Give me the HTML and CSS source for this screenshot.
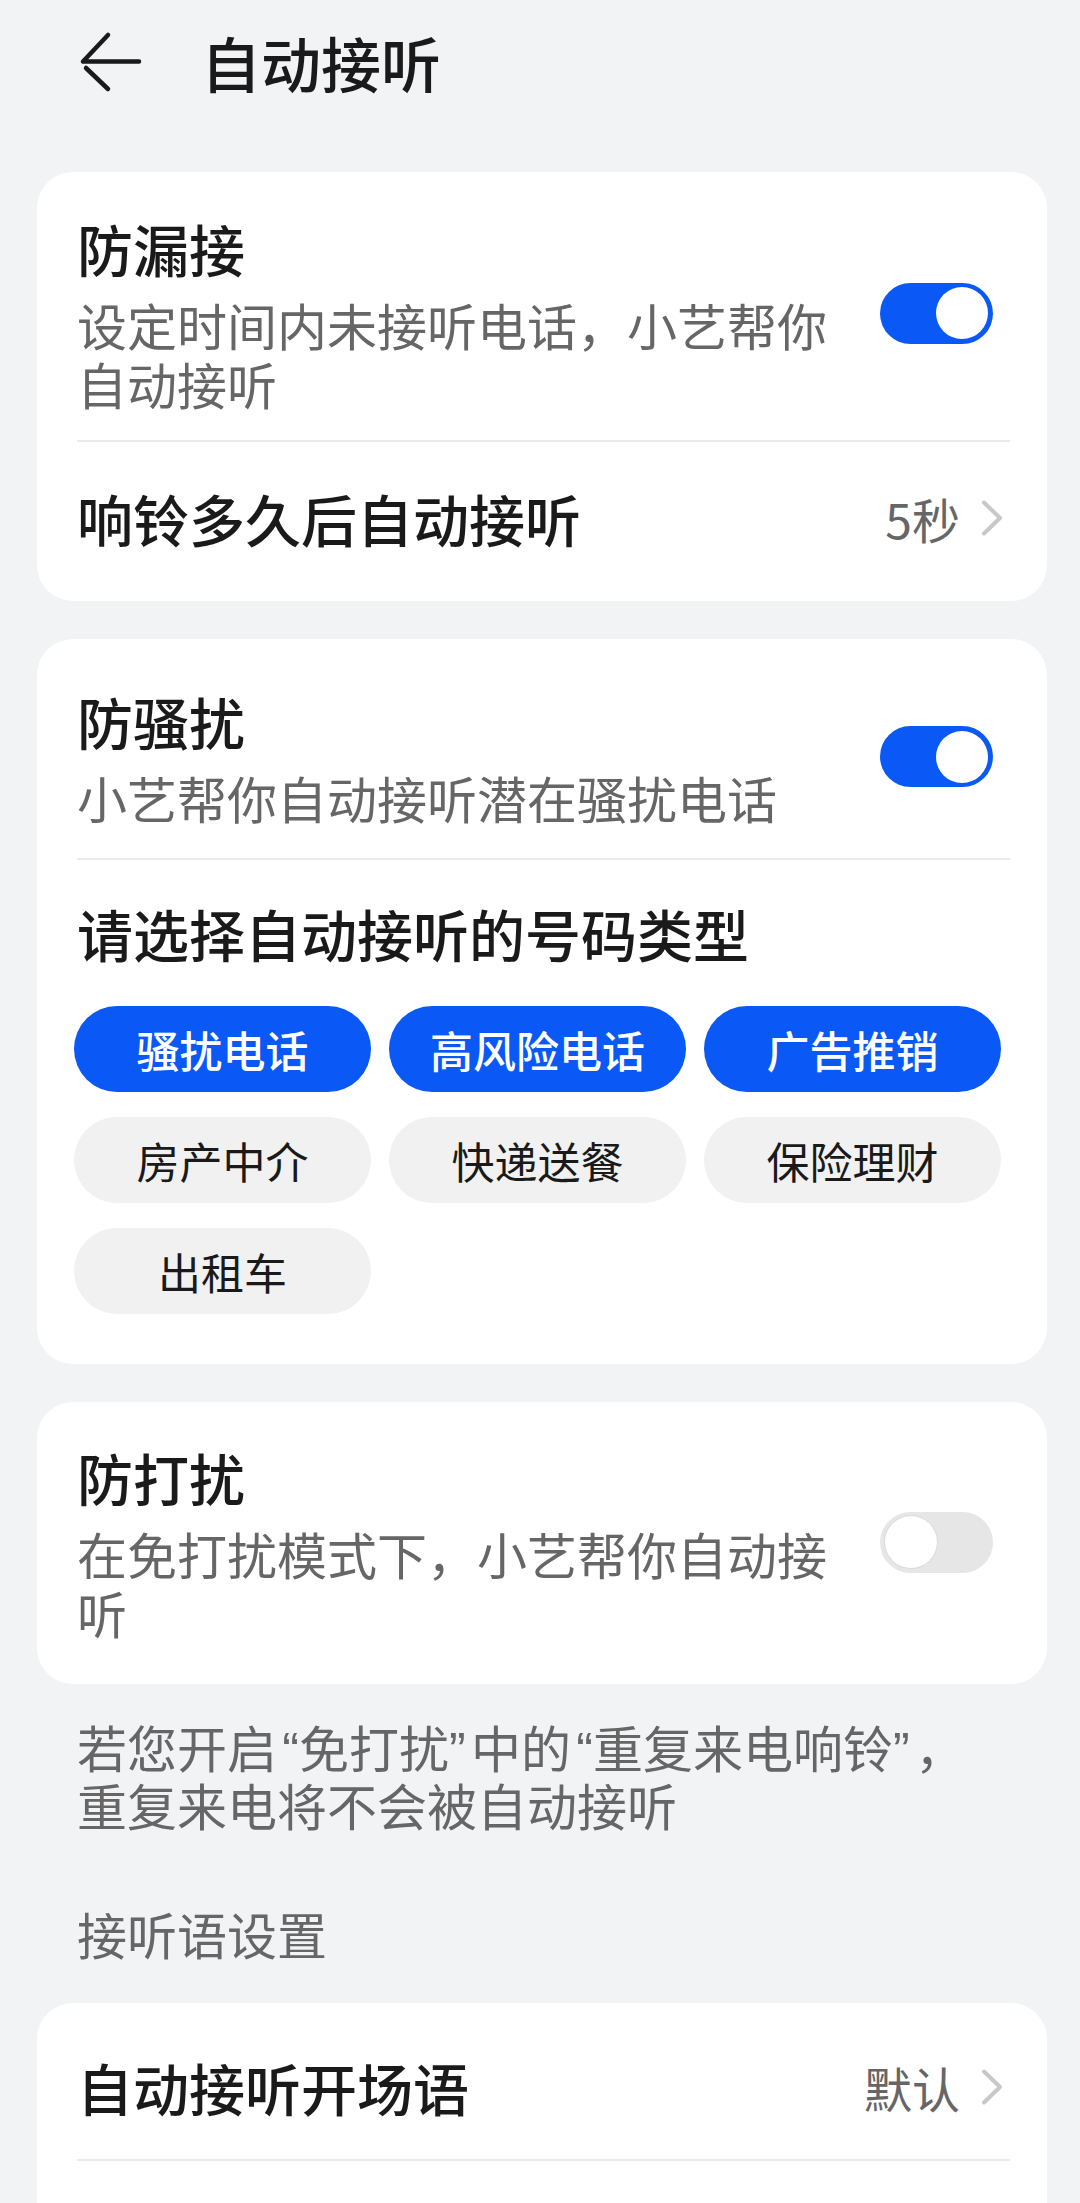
FILE: index.html
```html
<!DOCTYPE html>
<html lang="zh-CN">
<head>
<meta charset="utf-8">
<title>自动接听</title>
<link rel="stylesheet" href="styles.css">
</head>
<body>
<div class="page">
  <header class="topbar">
    <svg class="back" viewBox="0 0 64 64" aria-hidden="true">
      <path d="M30 5 L5 31.5 H61" fill="none" stroke="#1a1a1a" stroke-width="4.5" stroke-linecap="round" stroke-linejoin="round"/>
      <path d="M8 38 L30 59" fill="none" stroke="#1a1a1a" stroke-width="4.5" stroke-linecap="round"/>
    </svg>
    <h1 class="title">自动接听</h1>
  </header>

  <section class="card card-a">
    <div class="switch-row sep pad-a">
      <div class="text">
        <div class="item-title">防漏接</div>
        <div class="item-sub">设定时间内未接听电话，小艺帮你自动接听</div>
      </div>
      <span class="switch on"><span class="knob"></span></span>
    </div>
    <div class="link-row">
      <div class="item-title">响铃多久后自动接听</div>
      <div class="value">5秒<svg class="chev" viewBox="0 0 24 40" aria-hidden="true"><path d="M4 4.5 L20 20 L4 35.5" fill="none" stroke="#c8c8c8" stroke-width="4" stroke-linecap="round" stroke-linejoin="round"/></svg></div>
    </div>
  </section>

  <section class="card card-b">
    <div class="switch-row sep pad-b">
      <div class="text">
        <div class="item-title">防骚扰</div>
        <div class="item-sub">小艺帮你自动接听潜在骚扰电话</div>
      </div>
      <span class="switch on"><span class="knob"></span></span>
    </div>
    <div class="types">
      <div class="item-title">请选择自动接听的号码类型</div>
      <div class="chips">
        <span class="chip sel">骚扰电话</span>
        <span class="chip sel">高风险电话</span>
        <span class="chip sel">广告推销</span>
        <span class="chip">房产中介</span>
        <span class="chip">快递送餐</span>
        <span class="chip">保险理财</span>
        <span class="chip">出租车</span>
      </div>
    </div>
  </section>

  <section class="card card-c">
    <div class="switch-row pad-c">
      <div class="text">
        <div class="item-title">防打扰</div>
        <div class="item-sub">在免打扰模式下，小艺帮你自动接听</div>
      </div>
      <span class="switch off"><span class="knob"></span></span>
    </div>
  </section>

  <p class="note">若您开启<span class="q ql">“</span>免打扰<span class="q qr">”</span>中的<span class="q ql">“</span>重复来电响铃<span class="q qr">”</span>，重复来电将不会被自动接听</p>

  <h2 class="group">接听语设置</h2>

  <section class="card card-d">
    <div class="link-row sep row-d">
      <div class="item-title">自动接听开场语</div>
      <div class="value">默认<svg class="chev" viewBox="0 0 24 40" aria-hidden="true"><path d="M4 4.5 L20 20 L4 35.5" fill="none" stroke="#c8c8c8" stroke-width="4" stroke-linecap="round" stroke-linejoin="round"/></svg></div>
    </div>
    <div class="link-row"></div>
  </section>
</div>
</body>
</html>
```

FILE: styles.css
```css
html, body {
  margin: 0;
  padding: 0;
}

body {
  background: #f1f3f5;
  font-family: "Noto Sans CJK SC", "Noto Sans", sans-serif;
  color: #1a1a1a;
}

.page {
  width: 1080px;
  height: 2203px;
  overflow: hidden;
}

.topbar {
  height: 124px;
  display: flex;
  align-items: center;
  padding-left: 78px;
}

.back {
  width: 64px;
  height: 64px;
  flex: none;
}

.title {
  margin: 0 0 0 59px;
  font-size: 60px;
  line-height: 80px;
  font-weight: 500;
}

.card {
  background: #fff;
  border-radius: 36px;
  margin: 0 33px 0 37px;
  padding: 0 37px 0 40px;
}

.card-a { margin-top: 48px; }
.card-b { margin-top: 38px; }
.card-c { margin-top: 38px; }
.card-d { margin-top: 41px; }

.switch-row {
  display: flex;
  align-items: center;
  justify-content: space-between;
}

.pad-a { padding: 41px 0 27px; }
.pad-b { padding: 47px 0 31px; }
.pad-c { padding: 40px 0 42px; }

.sep {
  border-bottom: 2px solid #ebebeb;
}

.text {
  width: 760px;
}

.item-title {
  font-size: 56px;
  line-height: 70px;
  font-weight: 500;
  color: #1a1a1a;
}

.item-sub {
  margin-top: 12px;
  font-size: 50px;
  line-height: 59px;
  color: #666;
}

.switch {
  flex: none;
  width: 113px;
  height: 61px;
  margin-right: 17px;
  border-radius: 31px;
  box-sizing: border-box;
  padding: 0 5px;
  display: flex;
  align-items: center;
}

.switch.on {
  background: #0a59f7;
  justify-content: flex-end;
}

.switch.off {
  background: #e6e6e6;
  justify-content: flex-start;
}

.knob {
  width: 52px;
  height: 52px;
  border-radius: 50%;
  background: #fff;
}

.switch.off .knob {
  box-shadow: 0 0 0 1px rgba(0, 0, 0, 0.05);
}

.link-row {
  display: flex;
  align-items: center;
  justify-content: space-between;
  height: 151px;
  padding-bottom: 8px;
}

.row-d {
  height: 144px;
  padding: 12px 0 0;
}

.value {
  display: flex;
  align-items: center;
  font-size: 48px;
  line-height: 60px;
  color: #666;
}

.chev {
  width: 24px;
  height: 40px;
  margin-left: 20px;
  margin-right: 6px;
  flex: none;
}

.types {
  padding: 38px 0 50px;
}

.chips {
  margin: 38px 0 0 -3px;
  display: grid;
  grid-template-columns: repeat(3, 297px);
  column-gap: 18px;
  row-gap: 25px;
}

.chip {
  height: 86px;
  border-radius: 43px;
  display: flex;
  align-items: center;
  justify-content: center;
  font-size: 43px;
  background: #f1f1f1;
  color: #1a1a1a;
}

.chip.sel {
  background: #0a59f7;
  color: #fff;
  font-weight: 500;
}

.note {
  margin: 33px 0 0;
  padding: 0 77px;
  font-size: 50px;
  line-height: 58px;
  color: #666;
}

.q {
  display: inline-block;
  width: 22px;
  line-height: 40px;
  box-sizing: border-box;
  font-family: "Liberation Sans", sans-serif;
}

.ql {
  text-align: right;
}

.qr {
  text-align: left;
}

.group {
  margin: 71px 0 0;
  padding: 0 77px;
  font-size: 50px;
  line-height: 58px;
  font-weight: 400;
  color: #666;
}
```
